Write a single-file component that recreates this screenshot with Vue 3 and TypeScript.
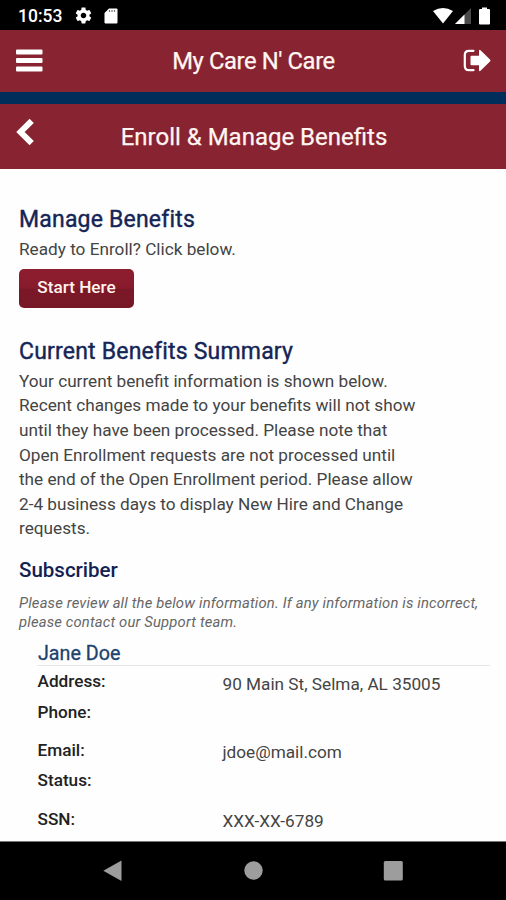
<script setup lang="ts">
interface Field {
  label: string
  value: string
}

const summaryLines: string[] = [
  'Your current benefit information is shown below.',
  'Recent changes made to your benefits will not show',
  'until they have been processed. Please note that',
  'Open Enrollment requests are not processed until',
  'the end of the Open Enrollment period. Please allow',
  '2-4 business days to display New Hire and Change',
  'requests.',
]

const fields: Field[] = [
  { label: 'Address:', value: '90 Main St, Selma, AL 35005' },
  { label: 'Phone:', value: '' },
  { label: 'Email:', value: 'jdoe@mail.com' },
  { label: 'Status:', value: '' },
  { label: 'SSN:', value: 'XXX-XX-6789' },
]
</script>

<template>
  <div class="screen">
    <div class="status">
      <span class="clock">10:53</span>
      <svg class="gear" viewBox="0 0 24 24" width="19" height="19">
        <path fill="#fff" d="M19.43 12.98c.04-.32.07-.64.07-.98s-.03-.66-.07-.98l2.11-1.65c.19-.15.24-.42.12-.64l-2-3.46c-.12-.22-.39-.3-.61-.22l-2.49 1c-.52-.4-1.08-.73-1.69-.98l-.38-2.65C14.46 2.18 14.25 2 14 2h-4c-.25 0-.46.18-.49.42l-.38 2.65c-.61.25-1.17.59-1.69.98l-2.49-1c-.23-.09-.49 0-.61.22l-2 3.46c-.13.22-.07.49.12.64l2.11 1.65c-.04.32-.07.65-.07.98s.03.66.07.98l-2.11 1.65c-.19.15-.24.42-.12.64l2 3.46c.12.22.39.3.61.22l2.49-1c.52.4 1.08.73 1.69.98l.38 2.65c.03.24.24.42.49.42h4c.25 0 .46-.18.49-.42l.38-2.65c.61-.25 1.17-.59 1.69-.98l2.49 1c.23.09.49 0 .61-.22l2-3.46c.12-.22.07-.49-.12-.64l-2.11-1.65zM12 15.5c-1.93 0-3.5-1.57-3.5-3.5s1.57-3.5 3.5-3.5 3.5 1.57 3.5 3.5-1.57 3.5-3.5 3.5z" />
      </svg>
      <svg class="card" viewBox="0 0 14 16" width="14" height="16">
        <path fill="#fff" d="M5 .5H12.500Q13.500.5 13.500 1.500V14.500Q13.500 15.500 12.500 15.500H1.500Q.5 15.500.5 14.500V5Z" />
        <path stroke="#777" stroke-width="1.200" d="M5.500 2v2M8 2v2M10.500 2v2" />
      </svg>
      <span class="spacer"></span>
      <svg class="wifi" viewBox="0 0 20 16" width="20" height="16">
        <path fill="#fff" d="M0 3Q10-3 20 3L10 15.500Z" />
      </svg>
      <svg class="signal" viewBox="0 0 16 16" width="16" height="16">
        <path fill="#4a4a4a" d="M0 16L16 0V16Z" />
        <path fill="#fff" d="M0 16L9.500 6.500V16Z" />
      </svg>
      <svg class="battery" viewBox="0 0 11 18" width="11" height="18">
        <path fill="#fff" d="M3 .5H8V2H10Q11 2 11 3V16.500Q11 17.500 10 17.500H1Q0 17.500 0 16.500V3Q0 2 1 2H3Z" />
      </svg>
    </div>

    <header class="bar app-bar">
      <button class="icon menu" aria-label="Menu">
        <svg viewBox="0 0 27 23" width="27" height="23">
          <g fill="#fff">
            <rect x="0" y="0.500" width="26.500" height="5" rx="1" />
            <rect x="0" y="9" width="26.500" height="5" rx="1" />
            <rect x="0" y="17.500" width="26.500" height="5" rx="1" />
          </g>
        </svg>
      </button>
      <h1 class="app-title">My Care N' Care</h1>
      <button class="icon logout" aria-label="Log out">
        <svg viewBox="0 0 28 23" width="28" height="23">
          <path d="M10.500 1.800H6Q1.800 1.800 1.800 6V17Q1.800 21.200 6 21.200H10.500" fill="none" stroke="#fff" stroke-width="2.200" stroke-linecap="round" />
          <path d="M7.500 7.800Q7.500 6.800 8.500 6.800H16V2Q16 0 17.500 1.200L27 10.500Q28 11.500 27 12.500L17.500 21.800Q16 23 16 21V16.200H8.500Q7.500 16.200 7.500 15.200Z" fill="#fff" />
        </svg>
      </button>
    </header>
    <div class="stripe"></div>
    <header class="bar page-bar">
      <button class="icon back" aria-label="Back">
        <svg viewBox="0 0 18 28" width="18" height="28">
          <path d="M15.700 2.800L4.500 14L15.700 25.200" fill="none" stroke="#fff" stroke-width="6" />
        </svg>
      </button>
      <h2 class="page-title">Enroll &amp; Manage Benefits</h2>
    </header>

    <main class="content">
      <h3 class="heading manage">Manage Benefits</h3>
      <p class="text">Ready to Enroll? Click below.</p>
      <button class="start">Start Here</button>

      <h3 class="heading summary">Current Benefits Summary</h3>
      <p class="text">
        <span v-for="line in summaryLines" :key="line" class="line">{{ line }}</span>
      </p>

      <h4 class="subscriber">Subscriber</h4>
      <p class="note">
        <span class="line">Please review all the below information. If any information is incorrect,</span>
        <span class="line">please contact our Support team.</span>
      </p>

      <section class="person">
        <h5 class="name">Jane Doe</h5>
        <dl class="fields">
          <div v-for="field in fields" :key="field.label" class="field" :class="{ blank: !field.value }">
            <dt>{{ field.label }}</dt>
            <dd>{{ field.value }}</dd>
          </div>
        </dl>
      </section>
    </main>

    <nav class="nav">
      <svg viewBox="0 0 20 22" width="20" height="22"><path fill="#9d9d9d" d="M18.500 .5V21L.3 10.800Z" /></svg>
      <svg viewBox="0 0 20 22" width="20" height="22"><circle fill="#9d9d9d" cx="10.500" cy="10.500" r="9.200" /></svg>
      <svg viewBox="0 0 20 22" width="20" height="22"><rect fill="#9d9d9d" x=".8" y="1" width="19" height="19.500" rx="1.500" /></svg>
    </nav>
  </div>
</template>

<style>
body {
  margin: 0;
  background: #fff;
}
</style>

<style scoped>
.screen {
  display: flex;
  flex-direction: column;
  width: 506px;
  height: 900px;
  overflow: hidden;
  background: #fefefe;
  font-family: Roboto, sans-serif;
  color: #444;
}
h1, h2, h3, h4, h5, p, dl, dt, dd {
  margin: 0;
}
h1, h2, h3, h4, h5 {
  font-weight: 500;
}
button {
  border: 0;
  padding: 0;
  background: none;
  font-family: inherit;
}
svg {
  display: block;
  flex: none;
}
.status {
  display: flex;
  align-items: center;
  box-sizing: border-box;
  height: 30px;
  flex: none;
  padding: 1px 16px 0 18px;
  background: #000;
}
.clock {
  width: 44px;
  color: #fff;
  font-size: 17.500px;
  font-weight: 500;
  white-space: nowrap;
}
.gear {
  margin-left: 12px;
}
.card {
  margin-left: 11px;
}
.spacer {
  flex: 1;
}
.wifi {
  margin-right: 2px;
}
.battery {
  margin-left: 8px;
}
.bar {
  display: grid;
  grid-template-columns: 60px 1fr 60px;
  flex: none;
  background: #882331;
  color: #fff6f2;
  text-align: center;
}
.app-bar {
  box-sizing: border-box;
  height: 62px;
  padding-bottom: 2px;
  align-items: center;
}
.menu {
  padding-left: 16px;
}
.app-title {
  padding: 1px 0 0 1px;
  font-size: 23.800px;
  line-height: 30px;
  font-weight: 400;
  letter-spacing: -0.400px;
  -webkit-text-stroke: 0.250px #fff6f2;
}
.logout {
  padding-left: 17px;
}
.stripe {
  flex: none;
  height: 12px;
  background: #002e5b;
}
.page-bar {
  height: 65px;
}
.back {
  align-self: start;
  padding: 14px 0 0 16px;
}
.page-title {
  padding: 18px 0 0 2px;
  font-size: 24px;
  line-height: 30px;
  font-weight: 400;
  -webkit-text-stroke: 0.250px #fff6f2;
}
.content {
  flex: 1;
  min-height: 0;
  overflow: hidden;
  padding: 0 16px 0 19px;
}
.heading {
  color: #142556;
  font-size: 23px;
  line-height: 28px;
  font-weight: 400;
  letter-spacing: 0.200px;
  font-variant-ligatures: common-ligatures;
  -webkit-text-stroke: 0.400px #142556;
}
.manage {
  padding-top: 37px;
}
.text {
  padding-top: 3px;
  font-size: 17.200px;
  line-height: 24.630px;
}
.line {
  display: block;
  white-space: nowrap;
}
.start {
  display: block;
  width: 115px;
  height: 39px;
  margin-top: 7px;
  padding-bottom: 2px;
  border-radius: 5px;
  background: linear-gradient(#8c1d2e 0%, #871b2c 48%, #7b1827 52%, #771726 100%);
  color: #fff3ef;
  font-size: 17.200px;
  font-weight: 500;
}
.summary {
  padding-top: 30px;
}
.subscriber {
  padding-top: 16px;
  color: #141f52;
  font-size: 20.500px;
  line-height: 26px;
}
.note {
  padding-top: 11px;
  color: #666;
  font-size: 14.800px;
  line-height: 18.500px;
  font-style: italic;
  letter-spacing: 0.165px;
}
.person {
  padding: 12px 0 0 18px;
}
.name {
  padding-left: 1px;
  border-bottom: 1px solid #e6e6e8;
  color: #20426f;
  font-size: 19.700px;
  line-height: 22px;
  font-weight: 400;
  -webkit-text-stroke: 0.300px #20426f;
}
.fields {
  padding-top: 3px;
}
.field {
  display: grid;
  grid-template-columns: 185px 1fr;
  height: 30.500px;
  font-size: 17.200px;
  line-height: 25px;
}
.field.blank {
  height: 38.300px;
}
dt {
  padding-left: 0.500px;
  color: #222;
  font-weight: 500;
}
dd {
  padding: 2.600px 0 0 0.500px;
  white-space: nowrap;
}
.nav {
  display: flex;
  align-items: center;
  justify-content: center;
  gap: 120px;
  box-sizing: border-box;
  flex: none;
  height: 59px;
  border-top: 1px solid #777;
  background: #000;
}
</style>
